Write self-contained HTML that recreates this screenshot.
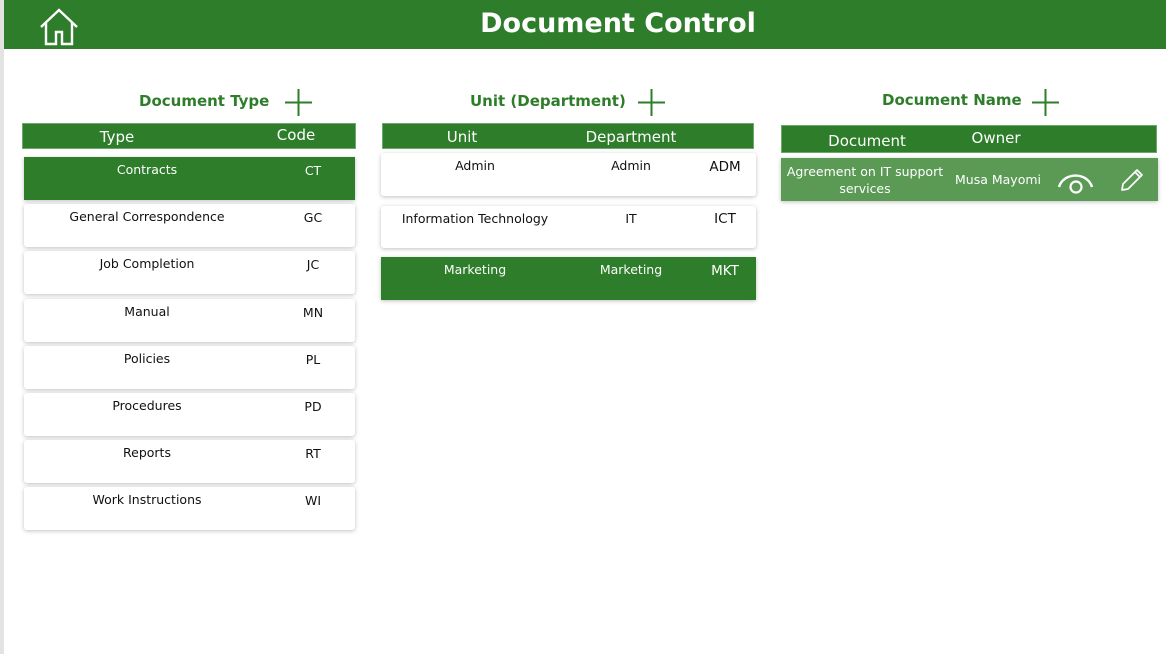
<!DOCTYPE html>
<html><head><meta charset="utf-8"><style>
*{margin:0;padding:0;box-sizing:border-box}
body{width:1166px;height:654px;background:#fff;position:relative;overflow:hidden;font-family:"DejaVu Sans","Liberation Sans",sans-serif;}
.strip{position:absolute;left:0;top:0;width:4px;height:654px;background:#e3e3e3}
.top{position:absolute;left:4px;top:0;width:1162px;height:49px;background:#2e7d2a}
.title{position:absolute;top:8px;text-align:center;color:#fff;font-weight:bold;font-size:27px;}
.abs{position:absolute}
.sec{position:absolute;color:#2e7d2a;font-weight:bold;font-size:15px;white-space:nowrap}
.hdr{position:absolute;background:#2e7d2a;color:#fff;font-size:15px;border:1px solid #6da86a}
.row{position:absolute;background:#fff;border-radius:3px;box-shadow:0 1px 4px rgba(0,0,0,.25);font-size:12.5px;color:#111}
.g{background:#2e7d2a;color:#fff}
.t{position:absolute;transform:translateX(-50%);white-space:nowrap}
</style></head><body>
<div class="strip"></div>
<div class="top"></div>
<svg class="abs" style="left:39px;top:8px" width="40" height="38" viewBox="0 0 40 38"><path d="M2 19 L20 2 L38 19 M7 15 V36 H17 V24 H23 V36 H33 V15" fill="none" stroke="#fff" stroke-width="2.4" stroke-linejoin="miter"/></svg>
<div class="title" style="left:0;width:1236px">Document Control</div>

<div class="sec" style="left:139px;top:92px">Document Type</div>
<svg class="abs" style="left:285px;top:89px" width="28" height="28"><path d="M0 13.5H27M13.5 0V27" stroke="#2e7d2a" stroke-width="2"/></svg>
<div class="sec" style="left:470px;top:92px">Unit (Department)</div>
<svg class="abs" style="left:638px;top:89px" width="28" height="28"><path d="M0 13.5H27M13.5 0V27" stroke="#2e7d2a" stroke-width="2"/></svg>
<div class="sec" style="left:882px;top:91px">Document Name</div>
<svg class="abs" style="left:1032px;top:89px" width="28" height="28"><path d="M0 13.5H27M13.5 0V27" stroke="#2e7d2a" stroke-width="2"/></svg>

<div class="hdr" style="left:22px;top:123px;width:334px;height:26px"><span class="t" style="left:94px;top:4px">Type</span><span class="t" style="left:273px;top:2px">Code</span></div>
<div class="row g" style="left:24px;top:157px;width:331px;height:43px;border-radius:0"><span class="t" style="left:123px;top:5px">Contracts</span><span class="t" style="left:289px;top:6px">CT</span></div>
<div class="row" style="left:24px;top:204px;width:331px;height:43px"><span class="t" style="left:123px;top:5px">General Correspondence</span><span class="t" style="left:289px;top:6px">GC</span></div>
<div class="row" style="left:24px;top:251px;width:331px;height:43px"><span class="t" style="left:123px;top:5px">Job Completion</span><span class="t" style="left:289px;top:6px">JC</span></div>
<div class="row" style="left:24px;top:299px;width:331px;height:43px"><span class="t" style="left:123px;top:5px">Manual</span><span class="t" style="left:289px;top:6px">MN</span></div>
<div class="row" style="left:24px;top:346px;width:331px;height:43px"><span class="t" style="left:123px;top:5px">Policies</span><span class="t" style="left:289px;top:6px">PL</span></div>
<div class="row" style="left:24px;top:393px;width:331px;height:43px"><span class="t" style="left:123px;top:5px">Procedures</span><span class="t" style="left:289px;top:6px">PD</span></div>
<div class="row" style="left:24px;top:440px;width:331px;height:43px"><span class="t" style="left:123px;top:5px">Reports</span><span class="t" style="left:289px;top:6px">RT</span></div>
<div class="row" style="left:24px;top:487px;width:331px;height:43px"><span class="t" style="left:123px;top:5px">Work Instructions</span><span class="t" style="left:289px;top:6px">WI</span></div>

<div class="hdr" style="left:382px;top:123px;width:372px;height:26px"><span class="t" style="left:79px;top:4px">Unit</span><span class="t" style="left:248px;top:4px">Department</span></div>
<div class="row" style="left:381px;top:153px;width:375px;height:43px"><span class="t" style="left:94px;top:5px">Admin</span><span class="t" style="left:250px;top:5px">Admin</span><span class="t" style="left:344px;top:6px;font-size:13.5px">ADM</span></div>
<div class="row" style="left:381px;top:206px;width:375px;height:42px"><span class="t" style="left:94px;top:5px">Information Technology</span><span class="t" style="left:250px;top:5px">IT</span><span class="t" style="left:344px;top:5px;font-size:13.5px">ICT</span></div>
<div class="row g" style="left:381px;top:257px;width:375px;height:43px;border-radius:0"><span class="t" style="left:94px;top:5px">Marketing</span><span class="t" style="left:250px;top:5px">Marketing</span><span class="t" style="left:344px;top:6px;font-size:13.5px">MKT</span></div>

<div class="hdr" style="left:781px;top:125px;width:376px;height:28px"><span class="t" style="left:85px;top:6px">Document</span><span class="t" style="left:214px;top:3px">Owner</span></div>
<div class="row" style="left:781px;top:158px;width:377px;height:43px;background:#5a9a55;color:#fff;border-radius:0">
<span class="t" style="left:84px;top:5px;text-align:center;line-height:17px;font-size:12.5px">Agreement on IT support<br>services</span>
<span class="t" style="left:217px;top:14px">Musa Mayomi</span>
<svg class="abs" style="left:276px;top:8px" width="38" height="28"><path d="M2 21 A17 15 0 0 1 35 21" fill="none" stroke="#fff" stroke-width="2.4"/><circle cx="19" cy="21" r="5.5" fill="none" stroke="#fff" stroke-width="2.2"/></svg>
<svg class="abs" style="left:338px;top:9px" width="26" height="26"><path d="M3 23 L4 17 L18 3 L23 8 L9 22 Z M16 5 L21 10" fill="none" stroke="#fff" stroke-width="1.7" stroke-linejoin="round"/></svg>
</div>
</body></html>
